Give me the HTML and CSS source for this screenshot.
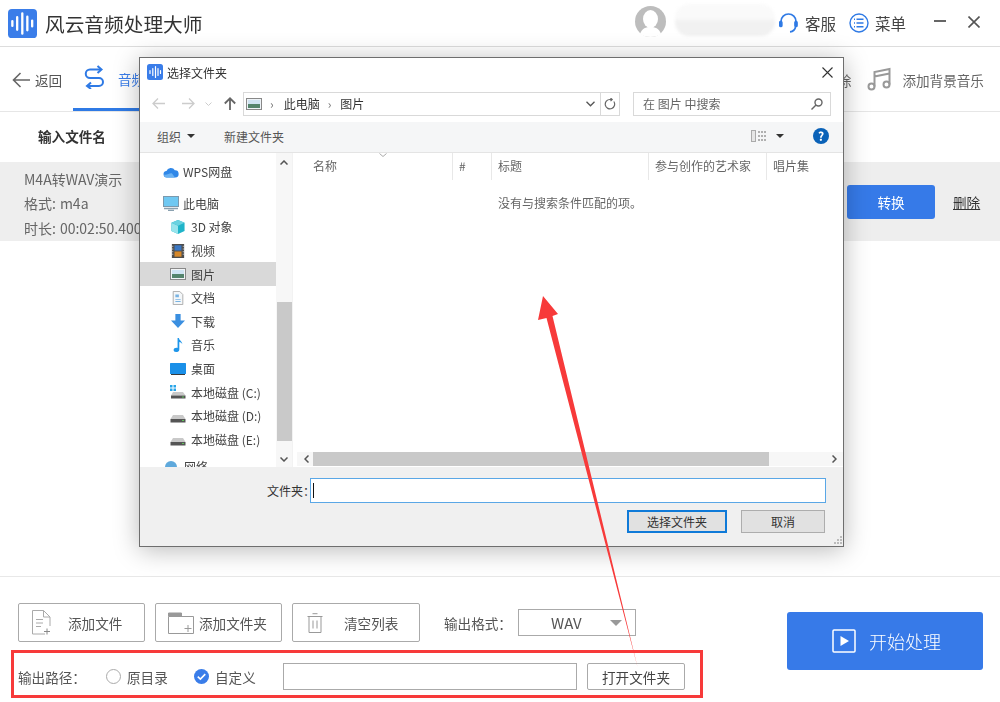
FILE: index.html
```html
<!DOCTYPE html>
<html lang="zh-CN">
<head>
<meta charset="utf-8">
<title>风云音频处理大师</title>
<link rel="stylesheet" href="styles.css">
</head>
<body>
<div class="app">
  <header class="top">
    <svg class="logo" viewBox="0 0 30 30"><rect width="30" height="30" rx="4" fill="#3a7de9"/><g stroke="#fff" stroke-linecap="round" stroke-width="2.4" fill="none"><path d="M4.5 12.5v5M9.5 8.5v13M14.8 4.5v21M20 8v14M25 12v6"/></g></svg>
    <span class="app-title">风云音频处理大师</span>
    <svg class="avatar" viewBox="0 0 31 31"><circle cx="15.5" cy="15.5" r="15.5" fill="#bdbdbd"/><ellipse cx="15.5" cy="13" rx="7.5" ry="9" fill="#fff"/><path d="M5 28c2-6 6-7 10.500-7s8.500 1 10.500 7c-3 2-6 3-10.500 3s-7.500-1-10.500-3z" fill="#fff"/></svg>
    <div class="blurred-name"></div>
    <svg class="headset" viewBox="0 0 19 22" fill="none" stroke="#2f7ae5" stroke-width="1.700"><path d="M2 13V9.500a7.500 7.500 0 0 1 15 0V13"/><path d="M16.500 15c-.5 3-2.500 4.500-5.500 4.800"/><rect x=".8" y="9.500" width="2" height="5" rx="1" fill="#2f7ae5"/><rect x="16" y="9.500" width="2" height="5" rx="1" fill="#2f7ae5"/></svg>
    <span class="top-link service">客服</span>
    <svg class="menu-ic" viewBox="0 0 20 20" fill="none" stroke="#2f7ae5"><circle cx="10" cy="10" r="9" stroke-width="1.400"/><path d="M7.500 6.200h7M7.500 10h7M7.500 13.800h7M5 6.200h1M5 10h1M5 13.800h1" stroke-width="1.500"/></svg>
    <span class="top-link menu-text">菜单</span>
    <span class="win-min"></span>
    <svg class="win-close" viewBox="0 0 12 12" stroke="#555" stroke-width="1.600"><path d="M.5.5l11 11M11.500.5l-11 11"/></svg>
  </header>

  <nav class="tabs">
    <svg class="back-ic" viewBox="0 0 18 16" fill="none" stroke="#666" stroke-width="1.600"><path d="M18 8H1.500M8.500 1L1.500 8l7 7"/></svg>
    <span class="back-text">返回</span>
    <div class="tab tab-active">
      <svg class="swap-ic" viewBox="0 0 21 24" fill="none" stroke="#2f7ae5" stroke-width="2"><path d="M13.500 1l4 3.500-4 3.500"/><path d="M17 4.500H6a4.200 4.200 0 0 0 0 8.500h9a4 4 0 0 1 0 8H3.500"/><path d="M7 17.500L3 21l4 3"/></svg>
      <span class="tab-label">音频转换</span>
    </div>
    <span class="tab-label-gray tab-far">人声消除</span>
    <svg class="music-ic" viewBox="0 0 24 24" fill="none" stroke="#999" stroke-width="2"><circle cx="4.500" cy="19.500" r="3"/><circle cx="19.500" cy="17.500" r="3"/><path d="M7.500 19.500V5L22.500 2v15.500M7.500 9.500L22.500 6.500"/></svg>
    <span class="tab-label-gray">添加背景音乐</span>
  </nav>

  <div class="table-head"><span class="col-name">输入文件名</span></div>

  <section class="file-row">
    <div class="file-info">
      <div>M4A转WAV演示</div>
      <div><span class="meta-key">格式:</span>m4a</div>
      <div><span class="meta-key">时长:</span>00:02:50.400</div>
    </div>
    <button class="convert">转换</button>
    <span class="delete">删除</span>
  </section>

  <div class="list-space"></div>

  <footer class="bottom">
    <div class="controls">
      <div class="row-one">
        <button class="tool-btn">
          <svg class="tool-ic file-ic" viewBox="0 0 21 25" fill="none" stroke="#aaa"><path d="M14 24H1.500V.5h11l6.500 6.500v9"/><path d="M12.500.5V7H19M5 9.500h7M5 13h7M5 16.500h5" /><path d="M16 18.500v6M13 21.500h6" stroke="#888"/></svg>
          <span class="btn-text t-file">添加文件</span>
        </button>
        <button class="tool-btn">
          <svg class="tool-ic folder-ic" viewBox="0 0 26 22" fill="none" stroke="#999"><path d="M.5 5v16.500h25V4.500H13"/><path d="M.5 1h13v3.500H.5z" fill="#999"/><path d="M20 13v7M16.500 16.500h7"/></svg>
          <span class="btn-text t-folder">添加文件夹</span>
        </button>
        <button class="tool-btn">
          <svg class="tool-ic trash-ic" viewBox="0 0 16 20" fill="none" stroke="#999"><path d="M.5 3.500h15M5.500.7h5M2 3.500V19.500h12V3.500M6 7.500v8M10 7.500v8"/></svg>
          <span class="btn-text t-trash">清空列表</span>
        </button>
        <span class="format-label">输出格式&#xFF1A;</span>
        <div class="format-select"><span class="format-value">WAV</span><span class="caret"></span></div>
      </div>
      <div class="row-two">
        <span class="path-label">输出路径&#xFF1A;</span>
        <span class="radio"></span>
        <span class="opt-one">原目录</span>
        <svg class="radio-on" viewBox="0 0 16 16"><circle cx="8" cy="8" r="8" fill="#3a7de9"/><path d="M4 8.200l2.800 2.600L12 5.500" fill="none" stroke="#fff" stroke-width="1.700"/></svg>
        <span class="opt-two">自定义</span>
        <div class="path-input"></div>
        <button class="open-btn">打开文件夹</button>
      </div>
    </div>
    <button class="start">
      <svg class="play-ic" viewBox="0 0 24 24" fill="none"><rect x="1" y="1" width="22" height="22" rx="1" stroke="#fff" stroke-width="1.500"/><path d="M8.500 7v10l8.500-5z" fill="#fff"/></svg>
      <span>开始处理</span>
    </button>
  </footer>
</div>

<div class="dialog">
  <div class="dlg-title">
    <svg class="dlg-logo" viewBox="0 0 16 16"><rect width="16" height="16" rx="2.500" fill="#3a7de9"/><path d="M3 6.500v3M5.800 4.500v7M8.500 2.500v11M11 4.500v7M13.500 6.500v3" stroke="#fff" stroke-width="1.200" stroke-linecap="round"/></svg>
    <span class="dlg-title-text">选择文件夹</span>
    <svg class="dlg-close" viewBox="0 0 11 11" stroke="#333" stroke-width="1.100"><path d="M.5.5l10 10M10.500.5l-10 10"/></svg>
  </div>

  <div class="dlg-nav">
    <svg class="nav-back" viewBox="0 0 13 11" fill="none" stroke="#ccc" stroke-width="1.300"><path d="M13 5.500H1M6 .5l-5 5 5 5"/></svg>
    <svg class="nav-fwd" viewBox="0 0 13 11" fill="none" stroke="#ccc" stroke-width="1.300"><path d="M0 5.500h12M7 .5l5 5-5 5"/></svg>
    <svg class="nav-down" viewBox="0 0 7 4" fill="none" stroke="#ccc"><path d="M.5.500l3 3 3-3"/></svg>
    <svg class="nav-up" viewBox="0 0 12 13" fill="none" stroke="#666" stroke-width="1.800"><path d="M6 13V1.500M.8 6.500L6 1.300l5.200 5.200"/></svg>
    <div class="addr">
      <svg class="addr-ic" viewBox="0 0 16 12"><rect x=".5" y=".5" width="15" height="11" fill="#eef3f7" stroke="#888"/><rect x="2" y="2" width="12" height="4" fill="#cfe3f2"/><rect x="2" y="6" width="12" height="4" fill="#54846c"/></svg>
      <span class="addr-sep first">›</span>
      <span class="addr-text">此电脑</span>
      <span class="addr-sep">›</span>
      <span class="addr-text">图片</span>
      <svg class="addr-chev" viewBox="0 0 9 6" fill="none" stroke="#555" stroke-width="1.300"><path d="M.5.800l4 4 4-4"/></svg>
      <div class="addr-refresh"><svg class="refresh-ic" viewBox="0 0 12 12" fill="none" stroke="#666" stroke-width="1.200"><path d="M9.800 3.500A4.700 4.700 0 1 1 6 1.500H8M6.500 0L8.200 1.500 6.500 3.200"/></svg></div>
    </div>
    <div class="search">
      <span class="search-text">在 图片 中搜索</span>
      <svg class="search-ic" viewBox="0 0 12 12" fill="none" stroke="#666" stroke-width="1.400"><circle cx="7.500" cy="4.500" r="3.500"/><path d="M5 7l-4.500 4.500"/></svg>
    </div>
  </div>

  <div class="dlg-tools">
    <span class="tool-org">组织</span><span class="tool-caret"></span>
    <span class="tool-new">新建文件夹</span>
    <svg class="view-ic" viewBox="0 0 16 12" fill="none"><rect x=".5" y=".5" width="4" height="11" fill="#e6e6e6" stroke="#aaa"/><path d="M7 2h9M7 6h9M7 10h9" stroke="#999" stroke-dasharray="2 1" stroke-width="1.300"/></svg>
    <span class="view-caret"></span>
    <span class="help">?</span>
  </div>

  <div class="dlg-main">
    <div class="tree">
      <div class="tree-list">
        <div class="node top-node wps"><svg class="n-ic" viewBox="0 0 16 12"><path d="M4 11.500a3.200 3.200 0 0 1-.5-6.400 4.500 4.500 0 0 1 8.300-.8 3.600 3.600 0 0 1 .5 7.200z" fill="#2f87e8"/><path d="M1 8.500a3 3 0 0 0 3 3h8l-3-4c-2-1-5 2-8 1z" fill="#69b1f2"/></svg><span>WPS网盘</span></div>
        <div class="node top-node pc"><svg class="n-ic big" viewBox="0 0 16 15"><rect x=".5" y=".5" width="15" height="10" fill="#6fc8f2" stroke="#7b99ad"/><path d="M1 12.500h14M5 14.500h6" stroke="#8aa1b0" stroke-width="1.300"/></svg><span>此电脑</span></div>
        <div class="node"><svg class="n-ic" viewBox="0 0 16 16"><path d="M8 0l7.500 3v9.500L8 16 .5 12.500V3z" fill="#1fb4c9"/><path d="M8 6.500L.5 3v9.500L8 16z" fill="#98e4ec"/><path d="M8 0l7.500 3L8 6.500.5 3z" fill="#6ad2e0"/></svg><span>3D 对象</span></div>
        <div class="node"><svg class="n-ic" viewBox="0 0 14 16"><rect width="14" height="16" fill="#4d4d4d"/><rect x="3" y="1.500" width="8" height="6" fill="#3b78c4"/><rect x="3" y="8.500" width="8" height="6" fill="#d6882a"/><path d="M1 2v12M13 2v12" stroke="#ccc" stroke-dasharray="1.500 1.500"/></svg><span>视频</span></div>
        <div class="node selected"><svg class="n-ic" viewBox="0 0 16 12"><rect x=".5" y=".5" width="15" height="11" fill="#f1f4f6" stroke="#888"/><rect x="2" y="2" width="12" height="4" fill="#cfe3f2"/><rect x="2" y="6" width="12" height="4" fill="#54846c"/></svg><span>图片</span></div>
        <div class="node"><svg class="n-ic" viewBox="0 0 12 16"><path d="M.5.500h7.500L11.500 4v11.500H.5z" fill="#f4f7f9" stroke="#a5a5a5"/><path d="M3 4h4v3H3zM3 9h6v1H3zM3 11.500h6v1H3z" fill="#78b3e2"/></svg><span>文档</span></div>
        <div class="node"><svg class="n-ic" viewBox="0 0 16 16"><path d="M5 0h6v7.500h5L8 16 0 7.500h5z" fill="#3a8fe0"/></svg><span>下载</span></div>
        <div class="node"><svg class="n-ic" viewBox="0 0 12 16"><path d="M5.500 0h1.500c.3 3 4 3.500 3.800 7-.8-1.600-2.200-2.200-3.300-2.300V13c0 2-1.800 3-3.700 3C1.900 16 1 15 1 13.700c0-1.800 2.300-2.900 4.500-2.300z" fill="#1f96ea"/></svg><span>音乐</span></div>
        <div class="node"><svg class="n-ic" viewBox="0 0 16 12"><rect width="16" height="11" rx=".6" fill="#1a90e8"/><path d="M1 11h14v1H1z" fill="#3a3a3a"/></svg><span>桌面</span></div>
        <div class="node"><svg class="n-ic" viewBox="0 0 16 14"><path d="M0 0h2.500v2.500H0zM3.500 0H6v2.500H3.500zM0 3.500h2.500V6H0zM3.500 3.500H6V6H3.500z" fill="#27a4e8"/><path d="M3 7h10l2.500 3.500H1z" fill="#c9c9c9"/><rect x="1" y="10.500" width="14.500" height="3" fill="#555"/><rect x="12" y="11.500" width="2" height="1" fill="#5ec458"/></svg><span>本地磁盘 (C:)</span></div>
        <div class="node"><svg class="n-ic" viewBox="0 0 16 14"><path d="M3 6h10l2.500 4H.5z" fill="#c9c9c9"/><rect x=".5" y="10" width="15" height="3.500" fill="#555"/><rect x="12" y="11" width="2" height="1" fill="#5ec458"/></svg><span>本地磁盘 (D:)</span></div>
        <div class="node"><svg class="n-ic" viewBox="0 0 16 14"><path d="M3 6h10l2.500 4H.5z" fill="#c9c9c9"/><rect x=".5" y="10" width="15" height="3.500" fill="#555"/><rect x="12" y="11" width="2" height="1" fill="#5ec458"/></svg><span>本地磁盘 (E:)</span></div>
        <div class="node top-node net"><svg class="n-ic" viewBox="0 0 16 14"><circle cx="8" cy="7" r="6" fill="#5fa9dc"/></svg><span>网络</span></div>
      </div>
      <div class="tree-bar">
        <svg class="bar-arrow" viewBox="0 0 8 5" fill="none" stroke="#555" stroke-width="1.500"><path d="M.5 4.500L4 1l3.500 3.500"/></svg>
        <div class="tree-thumb"></div>
        <svg class="bar-arrow down" viewBox="0 0 8 5" fill="none" stroke="#555" stroke-width="1.500"><path d="M.5.500L4 4l3.500-3.500"/></svg>
      </div>
    </div>
    <div class="files">
      <div class="cols">
        <span class="c c-name">名称<svg class="sort" viewBox="0 0 8 4" fill="none" stroke="#aaa"><path d="M.5.500L4 3.500 7.500.5"/></svg></span>
        <span class="c c-num">#</span>
        <span class="c c-title">标题</span>
        <span class="c c-artist">参与创作的艺术家</span>
        <span class="c c-album">唱片集</span>
      </div>
      <div class="empty">没有与搜索条件匹配的项。</div>
      <div class="hbar">
        <svg class="h-arrow" viewBox="0 0 5 8" fill="none" stroke="#555" stroke-width="1.500"><path d="M4.500.5L1 4l3.500 3.500"/></svg>
        <div class="h-track"><div class="h-thumb"></div></div>
        <svg class="h-arrow" viewBox="0 0 5 8" fill="none" stroke="#555" stroke-width="1.500"><path d="M.5.500L4 4 .5 7.500"/></svg>
      </div>
    </div>
  </div>

  <div class="dlg-foot">
    <div class="foot-row">
      <span class="foot-label">文件夹&#xFF1A;</span>
      <div class="foot-input"><span class="cursor"></span></div>
    </div>
    <div class="foot-btns">
      <button class="dlg-btn primary">选择文件夹</button>
      <button class="dlg-btn cancel">取消</button>
    </div>
    <svg class="grip" viewBox="0 0 9 9" fill="#bbb"><path d="M7 0h2v2H7zM4 3h2v2H4zM7 3h2v2H7zM1 6h2v2H1zM4 6h2v2H4zM7 6h2v2H7z"/></svg>
  </div>
</div>

<div class="red-box"></div>
<svg class="arrow" viewBox="0 0 1000 702"><path d="M543 296L558 314 552.500 316 637.500 667 546.500 318 538 320z" fill="#f73a3a"/></svg>
</body>
</html>
```

FILE: styles.css
```css
* { box-sizing: border-box; }
html, body { margin: 0; height: 100%; }
body {
  position: relative;
  width: 1000px;
  height: 702px;
  overflow: hidden;
  background: #fff;
  font-family: "Noto Sans CJK SC", "Noto Sans", sans-serif;
  color: #555;
  font-size: 13.6px;
  filter: blur(.3px);
}
button { font-family: inherit; cursor: default; padding: 0; }
svg { display: block; flex: none; }
.app { display: flex; flex-direction: column; height: 702px; }

/* header */
.top { height: 47px; flex: none; display: flex; align-items: center; border-bottom: 1px solid #ddd; padding-left: 8px; }
.logo { width: 29px; height: 29px; }
.app-title { margin-left: 8px; font-size: 19.700px; color: #333; width: 590px; white-space: nowrap; }
.avatar { width: 31px; height: 31px; margin-top: -4px; }
.blurred-name { width: 100px; height: 32px; margin-left: 9px; margin-top: -7px; border-radius: 14px; background: linear-gradient(180deg, #fafafa 45%, #f1f1f1 55%); filter: blur(1.500px); }
.headset { width: 19px; height: 22px; margin-left: 4px; }
.top-link { font-size: 15.500px; color: #444; white-space: nowrap; }
.service { margin-left: 7px; width: 31px; }
.menu-ic { width: 20px; height: 20px; margin-left: 13px; }
.menu-text { margin-left: 6px; width: 31px; }
.win-min { width: 12px; height: 2px; background: #666; margin-left: 28px; margin-top: -4px; }
.win-close { width: 12px; height: 12px; margin-left: 22px; margin-top: -3px; }

/* tabs */
.tabs { height: 65px; flex: none; display: flex; align-items: center; border-bottom: 1px solid #e6e6e6; padding: 2px 0 0 12px; position: relative; }
.back-ic { width: 18px; height: 16px; }
.back-text { margin-left: 5px; font-size: 13.600px; color: #555; width: 38px; white-space: nowrap; }
.tab { width: 160px; height: 64px; align-self: flex-end; display: flex; align-items: center; padding-left: 11px; border-bottom: 3px solid #2f7ae5; }
.swap-ic { width: 21px; height: 24px; margin-top: -1px; }
.tab-label { margin-left: 13px; padding-top: 3px; color: #3a7de9; font-size: 13.600px; white-space: nowrap; }
.tab-far { margin-left: 564px; }
.tab-label-gray { font-size: 13.600px; color: #666; white-space: nowrap; }
.music-ic { width: 24px; height: 24px; margin-left: 16px; margin-right: 11px; margin-top: -3px; }

/* table */
.table-head { height: 50px; flex: none; display: flex; align-items: center; padding: 0 0 2px 38px; }
.col-name { font-weight: 700; color: #333; font-size: 13.600px; }
.file-row { height: 79px; flex: none; background: #eee; display: flex; align-items: center; padding-left: 24px; }
.file-info { width: 823px; padding-top: 4px; font-size: 14px; line-height: 24.500px; color: #666; white-space: nowrap; }
.meta-key { margin-right: 4px; }
.convert { width: 88px; height: 34px; background: #367ae8; color: #fff; border: none; border-radius: 3px; font-size: 13.600px; }
.delete { margin-left: 18px; color: #333; text-decoration: underline; font-size: 13.600px; }
.list-space { flex: 1; }

/* footer */
.bottom { height: 126px; flex: none; border-top: 1px solid #e8e8e8; display: flex; justify-content: space-between; padding: 26px 17px 0 18px; }
.controls { display: flex; flex-direction: column; gap: 21px; }
.row-one { display: flex; align-items: center; height: 39px; }
.tool-btn { width: 127px; height: 39px; background: #fff; border: 1px solid #aaa; border-radius: 2px; margin-right: 10px; display: flex; align-items: center; color: #555; font-size: 13.600px; padding-left: 12px; }
.tool-btn:nth-child(3) { width: 128px; }
.tool-ic { flex: none; }
.file-ic { width: 21px; height: 25px; }
.folder-ic { width: 26px; height: 22px; }
.trash-ic { width: 16px; height: 20px; margin-left: 2px; }
.btn-text { white-space: nowrap; }
.t-file { margin-left: 16px; }
.t-folder { margin-left: 5px; }
.t-trash { margin-left: 21px; }
.format-label { margin-left: 14px; color: #555; white-space: nowrap; width: 74px; }
.format-select { width: 118px; height: 27px; border: 1px solid #aaa; display: flex; align-items: center; position: relative; }
.format-value { margin-left: 32px; font-size: 15px; color: #555; }
.caret { margin-left: 28px; width: 0; height: 0; border-left: 6px solid transparent; border-right: 6px solid transparent; border-top: 6px solid #999; }
.row-two { display: flex; align-items: center; height: 27px; }
.path-label { width: 88px; white-space: nowrap; color: #555; }
.radio { width: 15px; height: 15px; border: 1px solid #aaa; border-radius: 50%; background: #fff; }
.opt-one { margin-left: 6px; width: 67px; color: #555; white-space: nowrap; }
.radio-on { width: 15px; height: 15px; }
.opt-two { margin-left: 6px; width: 68px; color: #555; white-space: nowrap; }
.path-input { width: 294px; height: 27px; border: 1px solid #aaa; background: #fff; }
.open-btn { width: 98px; height: 27px; margin-left: 10px; background: #fff; border: 1px solid #aaa; border-radius: 2px; color: #444; font-size: 13.600px; }
.start { width: 196px; height: 58px; margin-top: 9px; background: #377ae8; border: none; border-radius: 3px; color: #fff; font-size: 18px; display: flex; align-items: center; justify-content: center; gap: 13px; font-weight: 300; padding-left: 3px; }
.play-ic { width: 24px; height: 24px; }

/* dialog */
.dialog { position: absolute; left: 139px; top: 57px; width: 705px; height: 490px; background: #fff; border: 1px solid #6e6e6e; box-shadow: 0 3px 24px rgba(0,0,0,.28); display: flex; flex-direction: column; font-size: 12px; color: #444; }
.dlg-title { height: 29px; flex: none; display: flex; align-items: center; padding: 0 0 1px 7px; }
.dlg-logo { width: 16px; height: 16px; }
.dlg-title-text { margin-left: 4px; color: #333; font-size: 12px; }
.dlg-close { width: 11px; height: 11px; margin-left: auto; margin-right: 10px; }
.dlg-nav { height: 35px; flex: none; display: flex; align-items: center; position: relative; padding: 0 0 2px 12px; }
.nav-back { width: 13px; height: 11px; }
.nav-fwd { width: 13px; height: 11px; margin-left: 17px; }
.nav-down { width: 7px; height: 4px; margin-left: 10px; }
.nav-up { width: 12px; height: 13px; margin-left: 12px; }
.addr { width: 377px; height: 24px; margin-left: 7px; border: 1px solid #d9d9d9; display: flex; align-items: center; padding-left: 2px; }
.addr-ic { width: 16px; height: 12px; }
.addr-sep { margin: 0 9px 0 8px; color: #777; font-size: 12px; }
.addr-sep.first { margin-right: 10px; }
.addr-text { color: #333; font-size: 12px; }
.addr-chev { width: 9px; height: 6px; margin-left: auto; margin-right: 5px; }
.addr-refresh { width: 19px; height: 22px; border-left: 1px solid #d9d9d9; display: flex; align-items: center; justify-content: center; }
.refresh-ic { width: 12px; height: 12px; }
.search { width: 198px; height: 24px; margin-left: 13px; border: 1px solid #d9d9d9; display: flex; align-items: center; padding-left: 9px; color: #666; }
.search-ic { width: 12px; height: 12px; margin-left: auto; margin-right: 7px; }
.dlg-tools { height: 31px; flex: none; background: #f5f6f7; border-bottom: 1px solid #e4e4e4; display: flex; align-items: center; padding: 0 0 2px 17px; color: #555; }
.tool-caret { width: 0; height: 0; margin-left: 6px; border-left: 4px solid transparent; border-right: 4px solid transparent; border-top: 4px solid #333; }
.tool-new { margin-left: 29px; }
.view-ic { width: 16px; height: 12px; margin-left: 467px; }
.view-caret { width: 0; height: 0; margin-left: 9px; border-left: 4px solid transparent; border-right: 4px solid transparent; border-top: 4px solid #333; }
.help { width: 16px; height: 16px; margin-left: 29px; border-radius: 50%; background: #0a62b8; color: #fff; font-weight: 700; font-size: 12px; line-height: 16px; text-align: center; }

.dlg-main { height: 314px; flex: none; display: flex; overflow: hidden; }
.tree { width: 152px; flex: none; display: flex; }
.tree-list { width: 136px; flex: none; padding-top: 7px; overflow: hidden; }
.node { height: 23.600px; display: flex; align-items: center; padding-left: 30px; gap: 5px; color: #444; white-space: nowrap; }
.node .n-ic { width: 16px; height: 14px; }
.node .n-ic.big { height: 15px; }
.top-node { padding-left: 23px; }
.wps, .pc { gap: 4px; }
.pc { margin-top: 8px; }
.net { margin-top: 4px; }
.selected { background: #d9d9d9; }
.tree-bar { width: 16px; display: flex; flex-direction: column; align-items: center; background: #f7f7f7; position: relative; padding-top: 7px; }
.bar-arrow { width: 8px; height: 5px; }
.bar-arrow.down { position: absolute; bottom: 5px; left: 4px; }
.tree-thumb { width: 15px; height: 139px; margin-top: 137px; background: #c9c9c9; }
.files { flex: 1; position: relative; padding-left: 5px; border-left: 1px solid #f2f2f2; }
.cols { height: 27px; display: flex; align-items: center; color: #666; }
.c { height: 27px; display: flex; align-items: center; border-right: 1px solid #e8e8e8; white-space: nowrap; position: relative; padding-bottom: 2px; }
.c-name { width: 155px; padding-left: 15px; }
.sort { position: absolute; left: 81px; top: 0; width: 8px; height: 4px; }
.c-num { width: 39px; padding-left: 6px; }
.c-title { width: 157px; padding-left: 6px; }
.c-artist { width: 118px; padding-left: 6px; }
.c-album { padding-left: 6px; border: none; }
.empty { margin-left: 200px; margin-top: 14px; color: #666; }
.hbar { position: absolute; left: 4px; right: 0; bottom: 1px; height: 14px; display: flex; align-items: center; background: #f7f7f7; padding: 0 6px 0 7px; }
.h-arrow { width: 5px; height: 8px; }
.h-track { flex: 1; height: 14px; margin: 0 4px; }
.h-thumb { width: 456px; height: 14px; background: #c9c9c9; }
.dlg-foot { flex: 1; background: #f0f0f0; position: relative; padding-top: 11px; }
.foot-row { display: flex; align-items: center; height: 25px; padding-left: 127px; }
.foot-label { width: 43px; color: #333; white-space: nowrap; }
.foot-input { width: 516px; height: 25px; background: #fff; border: 1px solid #5aa7e6; display: flex; align-items: center; padding-left: 2px; }
.cursor { width: 1px; height: 15px; background: #111; }
.foot-btns { display: flex; margin-top: 7px; padding-left: 487px; gap: 14px; }
.dlg-btn { height: 23px; background: #e1e1e1; font-size: 12px; color: #333; }
.primary { width: 100px; border: 2px solid #0f7ad8; }
.cancel { width: 84px; border: 1px solid #adadad; }
.grip { position: absolute; right: 1px; bottom: 1px; width: 9px; height: 9px; }

/* annotation overlays */
.red-box { position: absolute; left: 11px; top: 650px; width: 692px; height: 48px; border: 3px solid #f73a3a; }
.arrow { position: absolute; left: 0; top: 0; width: 1000px; height: 702px; pointer-events: none; }
```
